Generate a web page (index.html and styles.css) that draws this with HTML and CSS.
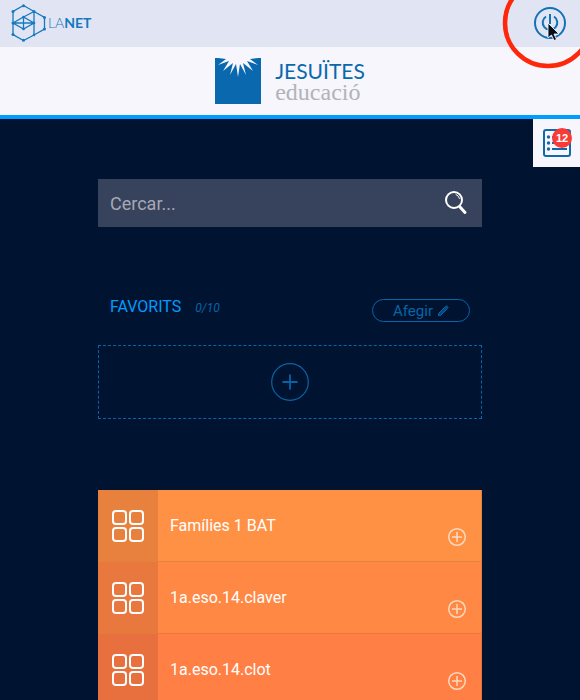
FILE: index.html
```html
<!DOCTYPE html>
<html lang="ca">
<head>
<meta charset="utf-8">
<meta name="viewport" content="width=device-width, initial-scale=1">
<title>LaNet</title>
<link rel="stylesheet" href="styles.css">
</head>
<body>
<svg class="defs" aria-hidden="true">
  <symbol id="grid" viewBox="0 0 34 34">
    <g fill="none" stroke="currentColor" stroke-width="2"><rect x="2" y="2" width="13" height="13" rx="3"/><rect x="19" y="2" width="13" height="13" rx="3"/><rect x="2" y="19" width="13" height="13" rx="3"/><rect x="19" y="19" width="13" height="13" rx="3"/></g>
  </symbol>
  <symbol id="add" viewBox="0 0 20 20">
    <g fill="none" stroke="currentColor" stroke-width="1.5"><circle cx="10" cy="10" r="8.3"/><path d="M10 5v10M5 10h10"/></g>
  </symbol>
</svg>
<header class="topbar">
  <a class="brand" href="#">
    <svg width="36" height="38" viewBox="0 0 36 38" aria-hidden="true">
      <path fill="none" stroke="#1679be" stroke-width="1.300" d="M12.500 1.500 23 7.500 33.500 13.500V25L23 31 12.500 36.500 2 30.500V7.500ZM2 19 12.500 13 23 19 12.500 25ZM12.500 13V25M2 19H23M12.500 13 23 7.500V31"/>
      <g fill="#1679be"><circle cx="12.500" cy="1.700" r="1.500"/><circle cx="2" cy="7.500" r="1.500"/><circle cx="23" cy="7.500" r="1.500"/><circle cx="33.500" cy="13.500" r="1.500"/><circle cx="33.500" cy="25" r="1.500"/><circle cx="23" cy="31" r="1.300"/><circle cx="12.500" cy="36.300" r="1.500"/><circle cx="2" cy="30.500" r="1.500"/><circle cx="2" cy="19" r="1.500"/><circle cx="12.500" cy="13" r="1.300"/><circle cx="12.500" cy="25" r="1.300"/><circle cx="23" cy="19" r="1.300"/></g>
    </svg>
    <span class="brand-name">LA<b>NET</b></span>
  </a>
  <button class="power" aria-label="Surt">
    <svg width="32" height="32" viewBox="0 0 32 32" fill="none" stroke="#1272b6" stroke-width="2"><circle cx="16" cy="16" r="15"/><path d="M16 7v10M12 9.500a7.300 7.300 0 1 0 8 0"/></svg>
  </button>
  <svg class="click-ring" width="92" height="92" viewBox="0 0 92 92" aria-hidden="true">
    <circle cx="46" cy="46" r="43" fill="none" stroke="#ff270b" stroke-width="4.500"/>
    <path d="M46 46v15l3.500-3 2.500 5.500 2.500-1-2.500-5.500h5z" fill="#080e1b" stroke="#fff" stroke-width=".8"/>
  </svg>
</header>
<div class="banner">
  <a class="school" href="#">
    <svg width="46" height="46" viewBox="0 0 46 46" aria-hidden="true">
      <path fill="#0968ae" d="M0 0h46v46H0z"/>
      <path fill="#f6f6fc" d="M3 0H43L35 1 43 7 32 3 38 13 28 5 31 17 25 6 23 19 21 6 15 17 18 5 8 13 14 3 3 7 11 1Z"/>
    </svg>
    <span class="school-text"><span class="school-name">JESUÏTES</span><span class="school-kind">educació</span></span>
  </a>
  <button class="tasks" aria-label="Tasques">
    <svg width="28" height="28" viewBox="0 0 28 28" fill="none" stroke="#1269aa" stroke-width="2"><rect x="1" y="1" width="26" height="26" rx="2"/><path d="M9 8h14M9 14h14M9 20h15"/><g fill="#1269aa" stroke="none"><circle cx="5.500" cy="8" r="1.700"/><circle cx="5.500" cy="14" r="1.700"/><circle cx="5.500" cy="20" r="1.700"/></g></svg>
    <span class="badge">12</span>
  </button>
</div>
<main class="content">
  <form class="search">
    <input type="text" placeholder="Cercar..." aria-label="Cercar">
    <button type="button" aria-label="Cerca">
      <svg width="24" height="24" viewBox="0 0 24 24" fill="none" stroke="#fff" stroke-linecap="round"><circle cx="10" cy="9" r="8" stroke-width="2"/><path d="m16 16 5 5.500" stroke-width="3"/><path d="M12 3.500a6 6 0 0 1 3.500 4" stroke-width="1"/></svg>
    </button>
  </form>
  <section>
    <div class="fav-head">
      <h2>FAVORITS</h2><span class="count">0/10</span>
      <button class="edit">Afegir
        <svg width="12" height="12" viewBox="0 0 12 12" fill="#06477e" stroke="currentColor"><path d="M1.500 8.500 8.500 1.500a1.400 1.400 0 0 1 2 2l-7 7H1.500z"/></svg>
      </button>
    </div>
    <div class="drop">
      <button aria-label="Afegeix un favorit"><svg width="38" height="38" viewBox="0 0 38 38" fill="none" stroke="#0764a8"><circle cx="19" cy="19" r="18.300" stroke-width="1.200"/><path d="M19 11.500v15M11.500 19h15" stroke-width="1.800"/></svg></button>
    </div>
  </section>
  <ul class="groups">
    <li class="tone-1"><span class="tile"><svg width="34" height="34"><use href="#grid"/></svg></span><a href="#">Famílies 1 BAT</a><button aria-label="Afegeix Famílies 1 BAT"><svg width="20" height="20"><use href="#add"/></svg></button></li>
    <li class="tone-2"><span class="tile"><svg width="34" height="34"><use href="#grid"/></svg></span><a href="#">1a.eso.14.claver</a><button aria-label="Afegeix 1a.eso.14.claver"><svg width="20" height="20"><use href="#add"/></svg></button></li>
    <li class="tone-3"><span class="tile"><svg width="34" height="34"><use href="#grid"/></svg></span><a href="#">1a.eso.14.clot</a><button aria-label="Afegeix 1a.eso.14.clot"><svg width="20" height="20"><use href="#add"/></svg></button></li>
  </ul>
</main>
</body>
</html>
```
FILE: styles.css
```css
* { box-sizing: border-box; }
body {
  margin: 0;
  height: 100vh;
  overflow: hidden;
  background: #001431;
  font-family: Roboto, sans-serif;
  font-size: 16px;
}
button { margin: 0; padding: 0; border: 0; background: none; font: inherit; cursor: pointer; }
a { color: inherit; text-decoration: none; }
svg { display: block; }
.defs { position: absolute; width: 0; height: 0; }

.topbar {
  position: relative;
  z-index: 1;
  display: flex;
  align-items: center;
  justify-content: space-between;
  padding: 4px 14px 5px 11px;
  background: #e1e5f3;
}
.brand { display: flex; align-items: center; gap: 1px; color: #1679be; }
.brand-name { font: 300 14px/20px Lato, sans-serif; }
.brand-name b { font-weight: 700; }
.click-ring { position: absolute; top: -23px; right: -14px; pointer-events: none; }

.banner {
  position: relative;
  display: flex;
  justify-content: center;
  padding: 11px 0;
  background: #f6f6fc;
  border-bottom: 4px solid #019cff;
}
.school { display: flex; gap: 14px; height: 46px; }
.school-text { display: flex; flex-direction: column; padding-top: 3px; }
.school-name { font: 400 21px/20px Lato, sans-serif; color: #0968ae; }
.school-kind { font: 400 24px/22px "Liberation Serif", serif; color: #b2b3b9; }
.tasks {
  position: absolute;
  top: 72px;
  right: 0;
  width: 47px;
  height: 48px;
  padding: 10px;
  background: #f6f6fc;
}
.badge {
  position: absolute;
  top: 9px;
  right: 8px;
  width: 20px;
  border-radius: 10px;
  background: #f93b36;
  color: #fff;
  font: 700 11px/20px "Liberation Sans", sans-serif;
}

.content { max-width: 384px; margin: 0 auto; padding-top: 60px; }
.search { display: flex; align-items: center; height: 48px; padding: 0 14px 0 12px; background: #37425c; }
.search input {
  flex: 1;
  min-width: 0;
  padding: 0;
  border: 0;
  outline: 0;
  background: none;
  color: #fff;
  font: inherit;
  font-size: 18px;
}
.search input::placeholder { color: #a6a8b5; opacity: 1; }

.fav-head { display: flex; padding: 72px 12px 23px; line-height: 16px; }
.fav-head h2 { margin: 0; color: #019cff; font-size: 16px; font-weight: 400; }
.count { padding-left: 14px; color: #0764a8; font-size: 12px; font-style: italic; line-height: 18px; }
.edit {
  display: flex;
  align-items: center;
  justify-content: center;
  gap: 4px;
  width: 98px;
  height: 23px;
  margin-left: auto;
  border: 1px solid #0764a8;
  border-radius: 12px;
  color: #0764a8;
  font-size: 15px;
}
.drop { display: flex; align-items: center; justify-content: center; height: 74px; border: 1px dashed #0764a8; }

.groups { margin: 71px 0 0; padding: 0; list-style: none; color: #fff; }
.groups li { display: flex; align-items: center; height: 72px; border-right: 1px solid #0000001a; border-bottom: 1px solid #0000001a; }
.tile { display: flex; align-items: center; justify-content: center; align-self: stretch; width: 60px; }
.groups a { flex: 1; padding-left: 12px; }
.groups button { align-self: flex-end; margin: 0 14px 14px 0; color: #ffd9bd; }
.tone-1 { background: #ff9145; }
.tone-2 { background: #ff8844; }
.tone-3 { background: #ff7f45; }
.tone-1 .tile { background: #e8813e; }
.tone-2 .tile { background: #e8783d; }
.tone-3 .tile { background: #e8703e; }
```
